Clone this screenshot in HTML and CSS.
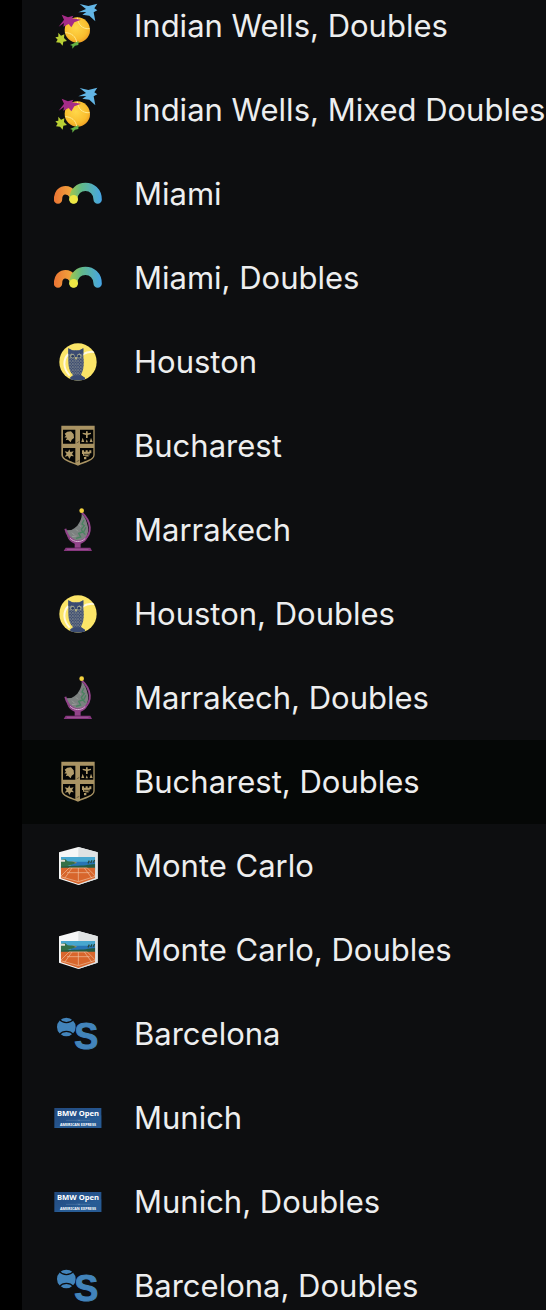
FILE: index.html
```html
<!DOCTYPE html>
<html lang="en">
<head>
<meta charset="utf-8">
<meta name="viewport" content="width=device-width, initial-scale=1">
<title>Tournaments</title>
<link rel="stylesheet" href="styles.css">
</head>
<body>
<svg class="sprite" aria-hidden="true">
  <defs>
    <radialGradient id="ball" cx="45%" cy="40%" r="65%">
      <stop offset="0" stop-color="#ffd84a"/><stop offset=".7" stop-color="#f9bd2e"/><stop offset="1" stop-color="#ee9a22"/>
    </radialGradient>
    <linearGradient id="orange" gradientUnits="userSpaceOnUse" x1="18" y1="0" x2="76" y2="0">
      <stop offset="0" stop-color="#ea7434"/><stop offset="1" stop-color="#f3aa3d"/>
    </linearGradient>
    <linearGradient id="sea" gradientUnits="userSpaceOnUse" x1="66" y1="0" x2="162" y2="0">
      <stop offset="0" stop-color="#a2c74c"/><stop offset=".35" stop-color="#62b987"/><stop offset="1" stop-color="#46a5e8"/>
    </linearGradient>
    <linearGradient id="navy" x1="0" y1="0" x2="1" y2="1">
      <stop offset="0" stop-color="#234a7e"/><stop offset=".6" stop-color="#265791"/><stop offset="1" stop-color="#24518a"/>
    </linearGradient>
    <pattern id="feathers" width="8" height="9" patternUnits="userSpaceOnUse">
      <rect width="8" height="9" fill="#3c4c72"/><path d="M1 1h3v4h-3zM5 5h2v3h-2z" fill="#9ba095"/>
    </pattern>
    <clipPath id="court"><path d="M38 51H142V114L91 132L38 114Z"/></clipPath>
    <clipPath id="disc"><circle cx="90" cy="78" r="56"/></clipPath>
  </defs>

  <symbol id="indian-wells" viewBox="18 6 144 144">
    <circle cx="88" cy="90" r="38" fill="url(#ball)"/>
    <path d="M52 98C70 98 84 110 86 127M88 53C90 74 103 88 125 86" fill="none" stroke="#ffe98a" stroke-width="3"/>
    <path d="M95 12L121 18L148 11L139 25L148 31L137 37L142 64L124 47L103 44L115 36L91 37L114 27Z" fill="#62b5e5"/>
    <path d="M41 44L60 52L76 47L72 55L99 59L79 67L70 82L62 72L46 80L48 69L32 80L48 59Z" fill="#a52c88"/>
    <path d="M31 98L39 107L49 103L48 114L57 123L46 125L44 137L36 128L24 127L29 119L22 112L31 110Z" fill="#b9cf35"/>
    <path d="M92 123L91 135L81 137L73 146L73 137L66 135L78 130Z" fill="#66b345"/>
  </symbol>

  <symbol id="miami" viewBox="18 0 144 144">
    <path d="M30 89C30 54 64 54 76 76" fill="none" stroke="url(#orange)" stroke-width="25" stroke-linecap="round"/>
    <path d="M76 88C76 38 149 38 149 89" fill="none" stroke="url(#sea)" stroke-width="25" stroke-linecap="round"/>
    <circle cx="77" cy="88" r="13" fill="#eee744"/>
  </symbol>

  <symbol id="houston" viewBox="18 6 144 144">
    <circle cx="90" cy="78" r="56" fill="#fbe568"/>
    <g clip-path="url(#disc)">
      <path d="M61 54C45 70 44 97 65 119M104 55C116 47 126 45 142 48" fill="none" stroke="#fff9df" stroke-width="6"/>
      <path d="M61 37L73 43H93L106 37V61C109 81 108 101 99 117L111 125V133H68L66 125L75 117C59 102 61 79 61 55Z" fill="url(#feathers)"/>
      <path d="M61 37L74 44H93L106 37V53L91 50L84 67L76 50L61 54ZM68 124L80 118H99L111 126V134H67Z" fill="#3a4b72"/>
      <circle cx="73" cy="60" r="7" fill="#9ba08b"/><circle cx="94" cy="60" r="7" fill="#9ba08b"/>
      <circle cx="74" cy="61" r="4" fill="#263961"/><circle cx="93" cy="61" r="4" fill="#263961"/>
      <path d="M80 64H88L84 73Z" fill="#cfc782"/>
    </g>
  </symbol>

  <symbol id="bucharest" viewBox="18 6 144 144">
    <path d="M40 17H140V105C140 121 111 128 90 137C69 128 40 121 40 105Z" fill="#a99363"/>
    <path d="M45 29H82V71H45ZM96 29H136V71H96ZM45 84H82V129C65 122 45 117 45 105ZM96 84H136V105C136 117 115 122 96 129Z" fill="#030404"/>
    <g fill="#b29c6b">
      <path d="M50 41L58 35L69 34L77 43L78 54L71 59L68 67L60 59L53 61L57 53L49 52L54 47Z"/>
      <path d="M64 88L67 96L77 94L72 102L78 109L69 108L64 117L60 108L50 110L56 102L50 94L60 96Z"/>
      <path d="M114 34H119V40L129 38V42L119 45V54H114V45L104 42V38L114 40ZM104 53L109 66H100ZM116 58L120 67H113ZM129 53L134 66H125Z"/>
      <path d="M102 91H108V95H113V91H119V95H124V91H130V100H125V106H121V111H115V118H108V111H112V107H105V102H102Z"/>
    </g>
    <path d="M108 103H125M110 109H120" stroke="#030404" stroke-width="2"/>
    <path d="M86 69L94 64M86 125L94 121" stroke="#473d2c" stroke-width="2"/>
  </symbol>

  <symbol id="marrakech" viewBox="18 6 144 144">
    <path d="M101 29C102 45 94 55 88 65L79 73L70 78L54 79C57 97 70 112 92 113C112 109 123 94 120 69C116 50 111 37 101 29Z" fill="#7c8180"/>
    <path d="M108 48L102 60L109 65L100 76L104 84L92 88L98 99L84 103M114 70L106 85L112 92" fill="none" stroke="#49835f" stroke-width="4"/>
    <path d="M72 86L80 94M84 76L90 82M94 62L98 68M72 98L86 96" stroke="#a4a7a5" stroke-width="2"/>
    <path d="M102 26C131 52 133 91 108 107C83 122 59 103 52 74" fill="none" stroke="#92438a" stroke-width="6"/>
    <path d="M57 90C68 122 111 123 121 88C119 110 108 116 98 119V131H80V119C68 115 58 105 57 90Z" fill="#92438a"/>
    <path d="M66 103C79 116 100 116 112 103" fill="none" stroke="#d5b0d0" stroke-width="3"/>
    <path d="M53 131H127L132 141H47Z" fill="#87377f"/>
    <path d="M58 136H121" stroke="#bd84b5" stroke-width="2" stroke-dasharray="4 2"/>
    <circle cx="101" cy="20" r="7" fill="#f4d23e"/>
  </symbol>

  <symbol id="monte-carlo" viewBox="18 6 144 144">
    <path d="M91 21L149 37V116L91 135L33 116V37Z" fill="#f6f7f7"/>
    <path d="M91 21L149 37V116L91 135Z" fill="#dfe2e3"/>
    <g clip-path="url(#court)">
      <path d="M38 51H142V90H38Z" fill="#48a7cf"/>
      <path d="M68 65H142V86H68Z" fill="#2875b4"/>
      <path d="M66 66Q76 62 87 68Q82 71 74 71Z" fill="#c09060"/>
      <path d="M38 60L51 57L59 64L75 65L85 69L70 74L58 76L83 80V86H38Z" fill="#347047"/>
      <path d="M38 59H51V65H38Z" fill="#e5ded1"/>
      <path d="M38 80C80 75 105 78 120 74L142 72V91H38Z" fill="#245c43"/>
      <path d="M120 70L124 62M128 69L132 61M136 68L140 60" stroke="#29483e" stroke-width="4"/>
      <path d="M38 83H142V135H38Z" fill="#d8662c"/>
      <path d="M38 109L63 84H118L142 108M50 115L72 84M132 115L109 84M91 84V124M57 98H125M38 110L91 125L142 109" fill="none" stroke="#f0bf9f" stroke-width="2"/>
    </g>
  </symbol>

  <symbol id="barcelona-ball" viewBox="18 0 144 144">
    <circle cx="55" cy="51" r="28" fill="#4284bb"/>
    <path d="M34 28C45 41 65 41 77 28M34 74C45 61 65 61 77 74" fill="none" stroke="#0d0e10" stroke-width="4"/>
  </symbol>

  <symbol id="munich-banner" viewBox="18 -6 144 144">
    <rect x="19" y="36" width="141" height="60" fill="url(#navy)"/>
    <path d="M19 96L105 70L160 58V96Z" fill="#2a6199" opacity=".6"/>
    <path d="M54 73H84M96 73H126" stroke="#7999bc" stroke-width="1"/>
    <path d="M87 71V75M91 71L93 75L95 71" fill="none" stroke="#c5d3e3" stroke-width="1"/>
  </symbol>
</svg>

<nav class="panel" aria-label="Tournaments">
  <ul class="list">
    <li><a class="row" href="#"><svg class="icon" aria-hidden="true"><use href="#indian-wells"/></svg><span>Indian Wells, Doubles</span></a></li>
    <li><a class="row" href="#"><svg class="icon" aria-hidden="true"><use href="#indian-wells"/></svg><span>Indian Wells, Mixed Doubles</span></a></li>
    <li><a class="row" href="#"><svg class="icon" aria-hidden="true"><use href="#miami"/></svg><span>Miami</span></a></li>
    <li><a class="row" href="#"><svg class="icon" aria-hidden="true"><use href="#miami"/></svg><span>Miami, Doubles</span></a></li>
    <li><a class="row" href="#"><svg class="icon" aria-hidden="true"><use href="#houston"/></svg><span>Houston</span></a></li>
    <li><a class="row" href="#"><svg class="icon" aria-hidden="true"><use href="#bucharest"/></svg><span>Bucharest</span></a></li>
    <li><a class="row" href="#"><svg class="icon" aria-hidden="true"><use href="#marrakech"/></svg><span>Marrakech</span></a></li>
    <li><a class="row" href="#"><svg class="icon" aria-hidden="true"><use href="#houston"/></svg><span>Houston, Doubles</span></a></li>
    <li><a class="row" href="#"><svg class="icon" aria-hidden="true"><use href="#marrakech"/></svg><span>Marrakech, Doubles</span></a></li>
    <li><a class="row row-active" href="#"><svg class="icon" aria-hidden="true"><use href="#bucharest"/></svg><span>Bucharest, Doubles</span></a></li>
    <li><a class="row" href="#"><svg class="icon" aria-hidden="true"><use href="#monte-carlo"/></svg><span>Monte Carlo</span></a></li>
    <li><a class="row" href="#"><svg class="icon" aria-hidden="true"><use href="#monte-carlo"/></svg><span>Monte Carlo, Doubles</span></a></li>
    <li><a class="row" href="#"><svg class="icon" viewBox="0 0 144 144" aria-hidden="true"><use href="#barcelona-ball"/><text class="s-mark" x="61" y="118">S</text></svg><span>Barcelona</span></a></li>
    <li><a class="row" href="#"><svg class="icon" viewBox="0 0 144 144" aria-hidden="true"><use href="#munich-banner"/><text class="bmw-title" x="72" y="67">BMW Open</text><text class="bmw-sponsor" x="72" y="95">AMERICAN EXPRESS</text></svg><span>Munich</span></a></li>
    <li><a class="row" href="#"><svg class="icon" viewBox="0 0 144 144" aria-hidden="true"><use href="#munich-banner"/><text class="bmw-title" x="72" y="67">BMW Open</text><text class="bmw-sponsor" x="72" y="95">AMERICAN EXPRESS</text></svg><span>Munich, Doubles</span></a></li>
    <li><a class="row" href="#"><svg class="icon" viewBox="0 0 144 144" aria-hidden="true"><use href="#barcelona-ball"/><text class="s-mark" x="61" y="118">S</text></svg><span>Barcelona, Doubles</span></a></li>
  </ul>
</nav>
</body>
</html>
```

FILE: styles.css
```css
* {
  box-sizing: border-box;
}

body {
  margin: 0;
  padding-left: 22px;
  height: 100vh;
  overflow: hidden;
  background: #000;
  color: #edeeef;
  font-family: Inter, "Liberation Sans", sans-serif;
}

.sprite {
  display: block;
  width: 0;
  height: 0;
}

.panel {
  height: 100%;
  overflow: hidden;
  background: #0d0e10;
}

/* The list is scrolled slightly past its first row. */
.list {
  margin: -16px 0 0;
  padding: 0;
  list-style: none;
}

.row {
  display: flex;
  align-items: center;
  gap: 32px;
  padding: 18px 0 18px 32px;
  color: inherit;
  font-size: 31px;
  line-height: 48px;
  white-space: nowrap;
  text-decoration: none;
}

.row-active {
  background: #050706;
}

.icon {
  flex: none;
  width: 48px;
  height: 48px;
}

.s-mark {
  fill: #4284bb;
  stroke: #4284bb;
  stroke-width: 3px;
  font: bold 108px "Liberation Sans", sans-serif;
}

.bmw-title,
.bmw-sponsor {
  fill: #fff;
  text-anchor: middle;
  font-family: "Noto Sans", sans-serif;
  font-weight: bold;
}

.bmw-title {
  font-size: 23px;
}

.bmw-sponsor {
  font-size: 11px;
}
```
